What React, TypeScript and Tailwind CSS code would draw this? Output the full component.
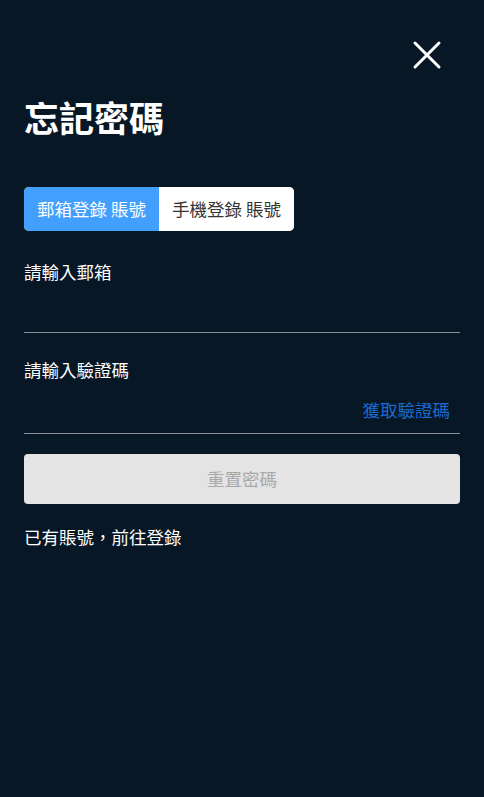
import { useState } from 'react'

const font = { fontFamily: '"Noto Sans CJK TC", "Noto Sans", sans-serif' }

export default function App() {
  const [tab, setTab] = useState<'email' | 'phone'>('email')

  return (
    <div className="min-h-[797px] w-full bg-[#081725] text-white" style={font}>
      <div className="px-6">
        {/* Close */}
        <div className="flex justify-end pt-[40px] pr-[18px]">
          <button className="w-[30px] h-[30px] flex items-center justify-center">
            <svg width="30" height="30" viewBox="0 0 30 30" fill="none" stroke="white" strokeWidth="3" strokeLinecap="round">
              <path d="M3 3 L27 27" />
              <path d="M27 3 L3 27" />
            </svg>
          </button>
        </div>

        <h1 className="mt-[24px] text-[35px] font-bold leading-[46px]">忘記密碼</h1>

        {/* Tabs */}
        <div className="mt-[47px] flex w-[270px] h-[44px] rounded-[5px] overflow-hidden bg-white">
          <button
            onClick={() => setTab('email')}
            className={`flex-1 text-[17.5px] ${tab === 'email' ? 'bg-[#429ffe] text-white' : 'bg-white text-[#333]'}`}
          >
            郵箱登錄 賬號
          </button>
          <button
            onClick={() => setTab('phone')}
            className={`flex-1 text-[17.5px] ${tab === 'phone' ? 'bg-[#429ffe] text-white' : 'bg-white text-[#333]'}`}
          >
            手機登錄 賬號
          </button>
        </div>

        {/* Email */}
        <div className="mt-[29px] text-[17.5px] leading-[24px]">請輸入郵箱</div>
        <div className="h-[49px] border-b border-[#8c9096]" />

        {/* Code */}
        <div className="mt-[25px] text-[17.5px] leading-[24px]">請輸入驗證碼</div>
        <div className="h-[52px] border-b border-[#8c9096] flex items-center justify-end pr-[10px] pt-[5px]">
          <span className="text-[17.5px] text-[#1a6bd0]">獲取驗證碼</span>
        </div>

        <button className="mt-[20px] w-full h-[50px] rounded-[4px] bg-[#e4e4e4] text-[17.5px] text-[#a9a9a9]">
          重置密碼
        </button>

        <div className="mt-[21px] text-[17.5px] leading-[24px]">已有賬號，前往登錄</div>
      </div>
    </div>
  )
}
